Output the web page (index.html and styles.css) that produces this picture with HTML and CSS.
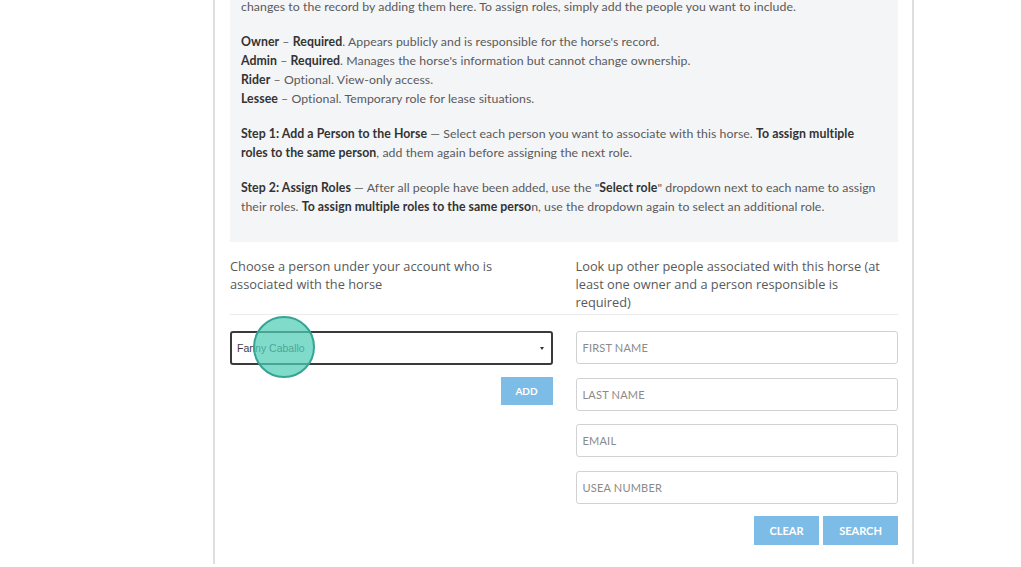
FILE: index.html
```html
<!DOCTYPE html>
<html lang="en">
<head>
<meta charset="utf-8">
<title>Add people to horse</title>
<link rel="stylesheet" href="styles.css">
</head>
<body>
<div class="card">
  <div class="info">
    <p class="intro">changes to the record by adding them here. To assign roles, simply add the people you want to include.</p>
    <p class="roles">
      <b>Owner</b> – <b>Required</b>. Appears publicly and is responsible for the horse's record.<br>
      <b>Admin</b> – <b>Required</b>. Manages the horse's information but cannot change ownership.<br>
      <b>Rider</b> – Optional. View-only access.<br>
      <b>Lessee</b> – Optional. Temporary role for lease situations.
    </p>
    <p><b>Step 1: Add a Person to the Horse</b> — Select each person you want to associate with this horse. <b>To assign multiple<br>roles to the same person</b>, add them again before assigning the next role.</p>
    <p><b>Step 2: Assign Roles</b> — After all people have been added, use the "<b>Select role</b>" dropdown next to each name to assign<br>their roles. <b>To assign multiple roles to the same perso</b>n, use the dropdown again to select an additional role.</p>
  </div>

  <div class="heads">
    <div class="label">Choose a person under your account who is associated with the horse</div>
    <div class="label">Look up other people associated with this horse (at least one owner and a person responsible is required)</div>
  </div>

  <div class="cols">
    <div class="col">
      <div class="select-wrap">
        <div class="select"><span>Fanny Caballo</span><span class="caret"></span></div>
        <div class="cursor"></div>
      </div>
      <div class="actions">
        <button class="btn btn-add">ADD</button>
      </div>
    </div>
    <div class="col">
      <div class="fields">
        <div class="input">FIRST NAME</div>
        <div class="input">LAST NAME</div>
        <div class="input">EMAIL</div>
        <div class="input">USEA NUMBER</div>
      </div>
      <div class="actions">
        <button class="btn btn-clear">CLEAR</button>
        <button class="btn btn-search">SEARCH</button>
      </div>
    </div>
  </div>
</div>
</body>
</html>
```
FILE: styles.css
```css
html, body {
  margin: 0;
  padding: 0;
  background: #ffffff;
  overflow: hidden;
}
body {
  font-family: Lato, "Open Sans", sans-serif;
  color: #555;
}
.card {
  margin-left: 213px;
  width: 668px;
  height: 567px;
  border-left: 2px solid #dedede;
  border-right: 2px solid #dedede;
  padding: 0 14px 0 15px;
  box-sizing: content-box;
}
.info {
  background: #f4f5f7;
  margin-top: -3px;
  padding: 0 11px 26px;
  font-size: 12.3px;
  line-height: 19px;
  letter-spacing: 0.05px;
  color: #5a5a5a;
}
.info p {
  margin: 0 0 16px;
}
.info p:last-child {
  margin-bottom: 0;
}
.info b {
  color: #333;
  font-weight: 700;
}
.heads {
  display: grid;
  grid-template-columns: 1fr 1fr;
  column-gap: 23px;
  padding: 15px 0 3px;
  border-bottom: 1px solid #ececec;
}
.label {
  font-family: "Open Sans", sans-serif;
  font-size: 12.8px;
  line-height: 18px;
  color: #595959;
  padding-right: 12px;
}
.cols {
  display: grid;
  grid-template-columns: 1fr 1fr;
  column-gap: 23px;
  padding-top: 16px;
}
.select-wrap {
  position: relative;
}
.select {
  height: 34px;
  box-sizing: border-box;
  border: 2px solid #3a3a3a;
  border-radius: 3px;
  display: flex;
  align-items: center;
  justify-content: space-between;
  padding: 0 7px 0 5px;
  font-family: "Liberation Sans", Arial, sans-serif;
  font-size: 10.5px;
  color: #3d3d3d;
}
.caret {
  width: 0;
  height: 0;
  border-left: 2.5px solid transparent;
  border-right: 2.5px solid transparent;
  border-top: 3px solid #333;
}
.cursor {
  position: absolute;
  left: 23px;
  top: -15px;
  width: 58px;
  height: 58px;
  border-radius: 50%;
  background: rgba(80, 205, 182, 0.72);
  border: 2px solid #35a493;
}
.actions {
  display: flex;
  justify-content: flex-end;
  gap: 4px;
  margin-top: 12px;
}
.fields {
  display: flex;
  flex-direction: column;
  gap: 13.5px;
}
.fields + .actions {
  margin-top: 12px;
}
.input {
  height: 33px;
  box-sizing: border-box;
  border: 1px solid #d2d2d2;
  border-radius: 3px;
  display: flex;
  align-items: center;
  padding-left: 6px;
  font-size: 11px;
  color: #8a8a8a;
  letter-spacing: 0.2px;
}
.btn {
  border: none;
  background: #7dbce6;
  color: #fff;
  font-family: Lato, sans-serif;
  font-size: 11px;
  font-weight: 700;
  padding: 0;
  height: 29px;
  cursor: pointer;
}
.btn-add {
  width: 52px;
  height: 28px;
  font-size: 10px;
}
.btn-clear {
  width: 65px;
}
.btn-search {
  width: 75px;
}
```
